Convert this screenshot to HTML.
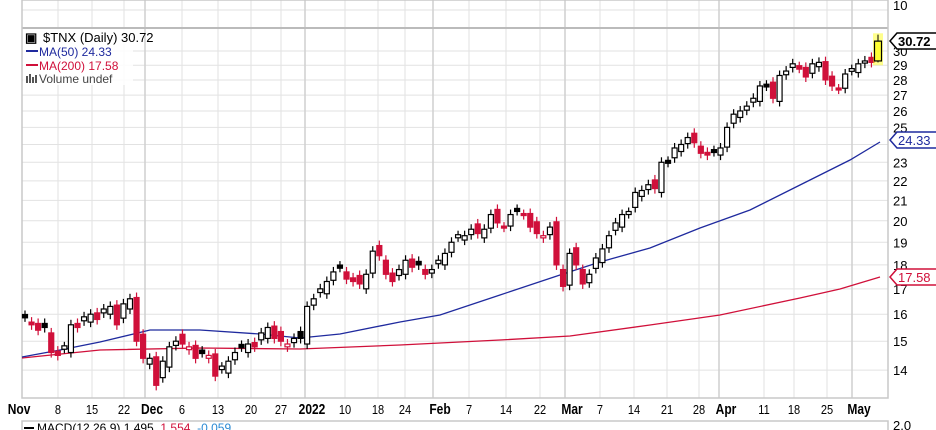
<!DOCTYPE html>
<html><head><meta charset="utf-8"><style>
body{margin:0;width:936px;height:430px;overflow:hidden;background:#fff;font-family:"Liberation Sans",sans-serif}
svg{display:block}
</style></head><body>
<svg id="s" width="936" height="430" xmlns="http://www.w3.org/2000/svg" font-family="Liberation Sans, sans-serif"></svg>
<script>
const s=document.getElementById('s');let h='';
const Y=p=>1474.8-418.6*Math.log(p);
const L=22,R=888,B=398,T=28;
for(let p=14;p<=30;p++){h+=`<line x1="${L}" x2="${R}" y1="${Y(p)}" y2="${Y(p)}" stroke="#e2e2e2"/>`;}
[10].forEach(y=>h+=`<line x1="${L}" x2="${R}" y1="${y}" y2="${y}" stroke="#e2e2e2"/>`);
const xl=[[19,'Nov',1],[58,'8'],[92,'15'],[124,'22'],[152,'Dec',1],[182,'6'],[218,'13'],[251,'20'],[281,'27'],[312,'2022',1],[345,'10'],[378,'18'],[405,'24'],[440,'Feb',1],[469,'7'],[506,'14'],[540,'22'],[572,'Mar',1],[600,'7'],[634,'14'],[667,'21'],[699,'28'],[726,'Apr',1],[764,'11'],[794,'18'],[827,'25'],[859,'May',1]];
xl.forEach(a=>{let gx=a[2]?a[0]-7:a[0];if(a[1]!='Nov')h+=`<line x1="${gx}" x2="${gx}" y1="0" y2="${B}" stroke="${a[2]?'#cfcfcf':'#e2e2e2'}" stroke-width="${a[2]?1.5:1}"/>`;
if(a[2])h+=`<text x="${(a[0]/0.8).toFixed(1)}" y="414" font-size="15" font-weight="bold" text-anchor="middle" transform="scale(0.8,1)">${a[1]}</text>`;
else h+=`<text x="${(a[0]/0.85).toFixed(1)}" y="414" font-size="13" text-anchor="middle" transform="scale(0.85,1)">${a[1]}</text>`;});
h+=`<line x1="${L}" x2="${R}" y1="${T}" y2="${T}" stroke="#bbb" stroke-width="2"/>`;
h+=`<rect x="${L}" y="0" width="${R-L}" height="${B}" fill="none" stroke="#c8c8c8" stroke-width="1.5"/>`;
h+=`<rect x="${L}" y="421" width="${R-L}" height="12" fill="none" stroke="#c8c8c8" stroke-width="1.5"/>`;
for(let p=14;p<=30;p++){if(p==24)continue;h+=`<text x="893" y="${Y(p)+5}" font-size="13" fill="#000">${p}</text>`;}
h+=`<text x="893" y="10" font-size="13">10</text><text x="893" y="430" font-size="13">2.0</text>`;
h+=`<polyline fill="none" stroke="#d0103a" stroke-width="1.3" points="22,358 100,350 200,348 300,349 400,345 500,340 570,336 650,325 720,315 800,298 840,289 880,277"/>`;
h+=`<polyline fill="none" stroke="#1f2a9e" stroke-width="1.3" points="22,357 60,350 100,342 150,330 200,330 260,334 300,338 340,334 400,322 440,315 500,295 560,275 600,262 650,248 700,228 750,210 800,185 850,160 880,142"/>`;
const c=[15.9,15.6,15.4,15.5,14.6,14.5,14.8,15.6,15.5,15.9,16.0,15.8,16.2,16.3,15.6,16.4,16.6,15.0,14.4,
14.4,13.5,14.3,14.8,15.0,14.9,14.8,14.4,14.6,14.5,13.8,14.1,14.3,14.6,14.8,14.9,14.8,15.3,15.5,15.1,15.0,14.9,15.1,15.1,
16.3,16.6,17.0,17.3,17.7,17.9,17.4,17.3,17.2,17.6,18.6,18.4,17.6,17.3,17.8,18.2,17.9,18.0,17.6,
17.8,18.2,18.5,19.0,19.3,19.3,19.6,19.4,19.6,20.3,19.9,19.7,20.3,20.5,20.3,19.7,19.4,19.3,19.7,18.0,
17.1,18.5,18.0,17.2,17.6,18.3,18.7,19.3,19.9,20.3,20.4,21.4,21.5,21.8,21.6,23.0,23.0,23.8,24.0,24.4,24.1,23.5,23.4,
23.6,23.8,25.0,25.8,26.0,26.3,26.8,27.6,27.6,26.8,28.3,28.6,29.1,28.8,28.2,29.1,29.2,28.0,27.6,27.4,28.4,28.7,29.1,29.3,29.2];
const dx=(878-25)/c.length;
let pc=15.7;
c.forEach((v,i)=>{const x=25+i*dx;let o=pc+(i%3==0?0.25:(i%3==1?-0.2:0.05));
const col=v>=pc?'#000':'#d0103a';const hi=Math.max(o,v)*1.012,lo=Math.min(o,v)*0.988;
h+=`<line x1="${x}" x2="${x}" y1="${Y(hi)}" y2="${Y(lo)}" stroke="${col}" stroke-width="1.2"/>`;
let y1=Y(Math.max(o,v)),y2=Y(Math.min(o,v));if(y2-y1<2){y1-=1;y2+=1;}
h+=`<rect x="${x-2.5}" y="${y1}" width="5" height="${y2-y1}" fill="${v>o?'#fff':col}" stroke="${col}" stroke-width="1.2"/>`;pc=v;});
{const x=878;h+=`<rect x="${x-5}" y="${Y(31.3)}" width="10" height="${Y(29)-Y(31.3)}" fill="#ffff00" opacity="0.45"/><line x1="${x}" x2="${x}" y1="${Y(31.2)}" y2="${Y(29.2)}" stroke="#000"/><rect x="${x-3.5}" y="${Y(30.72)}" width="7" height="${Y(29.3)-Y(30.72)}" fill="#ffff33" stroke="#000" stroke-width="1.2"/>`;}
function tag(y,t,col,b){h+=`<path d="M890 ${y} l7 -8 h41 v16 h-41 z" fill="#fff" stroke="${col}" stroke-width="1.5"/><text x="898" y="${y+5}" font-size="13" fill="${col}" font-weight="${b?'bold':'normal'}">${t}</text>`;}
tag(41,'30.72','#000',1);tag(140,'24.33','#1f2a9e');tag(277,'17.58','#d0103a');
h+=`<rect x="23" y="29" width="110" height="56" fill="#fff" opacity="0.85"/>`;
h+=`<text x="25" y="42" font-size="13" font-weight="bold">&#9635;</text><text x="43" y="42" font-size="13">$TNX (Daily) 30.72</text>`;
h+=`<rect x="26" y="50" width="12" height="2" fill="#1f2a9e"/><text x="39" y="56" font-size="12" fill="#1f2a9e">MA(50) 24.33</text>`;
h+=`<rect x="26" y="64" width="12" height="2" fill="#d0103a"/><text x="39" y="70" font-size="12" fill="#d0103a">MA(200) 17.58</text>`;
h+=`<rect x="26" y="76" width="2" height="7" fill="#555"/><rect x="29" y="74" width="2" height="9" fill="#555"/><rect x="32" y="77" width="2" height="6" fill="#555"/><rect x="35" y="75" width="2" height="8" fill="#555"/><text x="39" y="83" font-size="12" fill="#444">Volume undef</text>`;
h+=`<rect x="24" y="427" width="10" height="2" fill="#000"/><text x="37" y="432" font-size="12">MACD(12,26,9) 1.495, <tspan fill="#d0103a">1.554</tspan>, <tspan fill="#2a8ad4">-0.059</tspan></text>`;
s.innerHTML=h;
</script>
</body></html>
